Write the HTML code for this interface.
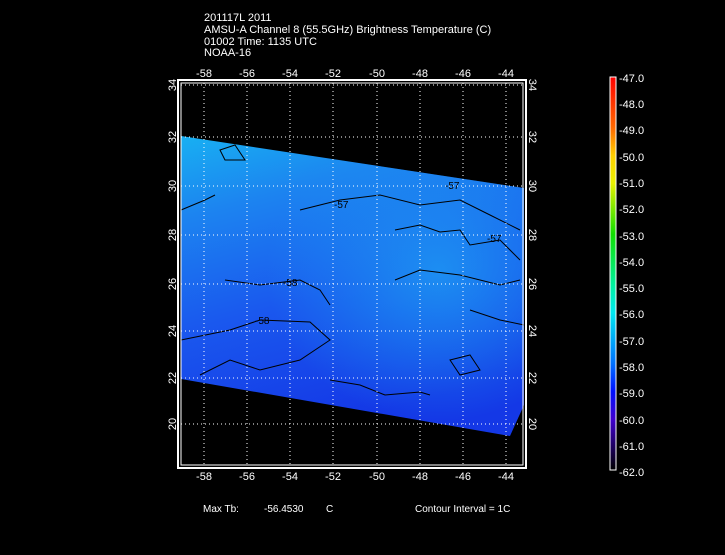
<!DOCTYPE html>
<html><head><style>
body{margin:0;background:#000;width:725px;height:550px;overflow:hidden;font-family:"Liberation Sans",sans-serif;}
svg text{font-family:"Liberation Sans",sans-serif;fill:#fff;}
</style></head><body>
<svg width="725" height="550" viewBox="0 0 725 550" xmlns="http://www.w3.org/2000/svg">
<defs>
<linearGradient id="sw" x1="0" y1="0" x2="0.3" y2="1">
<stop offset="0" stop-color="#18b0f2"/>
<stop offset="0.25" stop-color="#1c84f0"/>
<stop offset="0.6" stop-color="#1a58ee"/>
<stop offset="1" stop-color="#1438e6"/>
</linearGradient>
<radialGradient id="lt" cx="0.75" cy="0.45" r="0.5">
<stop offset="0" stop-color="#1c94f2" stop-opacity="0.9"/>
<stop offset="1" stop-color="#1c94f2" stop-opacity="0"/>
</radialGradient>
<linearGradient id="cb" x1="0" y1="0" x2="0" y2="1">
<stop offset="0" stop-color="#ff0000"/>
<stop offset="0.13" stop-color="#ff6a00"/>
<stop offset="0.2" stop-color="#ffd000"/>
<stop offset="0.27" stop-color="#e8f000"/>
<stop offset="0.4" stop-color="#10e000"/>
<stop offset="0.53" stop-color="#00f0a0"/>
<stop offset="0.6" stop-color="#00e8f0"/>
<stop offset="0.73" stop-color="#0070ff"/>
<stop offset="0.8" stop-color="#0010ff"/>
<stop offset="0.87" stop-color="#4000d0"/>
<stop offset="1" stop-color="#000000"/>
</linearGradient>
</defs>
<text x="204" y="21" font-size="11">201117L 2011</text>
<text x="204" y="33" font-size="11">AMSU-A Channel 8 (55.5GHz) Brightness Temperature (C)</text>
<text x="204" y="45" font-size="11">01002 Time: 1135 UTC</text>
<text x="204" y="56" font-size="11">NOAA-16</text>

<polygon points="181,136 524,188 524,405 510,436 181,379" fill="url(#sw)"/>
<polygon points="181,136 524,188 524,405 510,436 181,379" fill="url(#lt)"/>
<g fill="none" stroke="#000" stroke-width="1">
<path d="M181,210 L205,200 L215,195"/>
<path d="M300,210 L340,200 L380,195 L420,205 L460,200 L490,215 L520,230"/>
<path d="M395,230 L420,225 L440,232 L460,230 L470,245 L500,240 L520,260"/>
<path d="M395,280 L420,270 L460,275 L500,285 L520,280"/>
<path d="M181,340 L230,330 L260,320 L310,322 L330,340 L300,360 L260,370 L230,360 L200,375"/>
<path d="M225,280 L260,285 L300,280 L320,290 L330,305"/>
<path d="M220,150 L235,145 L245,160 L225,160 Z"/>
<path d="M450,360 L470,355 L480,370 L460,375 Z"/>
<path d="M330,380 L360,385 L385,395 L420,392 L430,395"/>
<path d="M470,310 L500,320 L524,325"/>
</g>
<text x="334" y="208" font-size="10" style="fill:#000">-57</text>
<text x="445" y="189" font-size="10" style="fill:#000">-57</text>
<text x="487" y="242" font-size="10" style="fill:#000">-57</text>
<text x="255" y="324" font-size="10" style="fill:#000">-58</text>
<text x="283" y="286" font-size="10" style="fill:#000">-58</text>

<g stroke="#fff" stroke-width="1" stroke-dasharray="1,3" fill="none">
<path d="M204,83V466M247,83V466M290,83V466M333,83V466M377,83V466M420,83V466M463,83V466M506,83V466"/>
<path d="M181,85H524M181,137H524M181,186H524M181,235H524M181,284H524M181,331H524M181,378H524M181,424H524"/>
</g>
<rect x="178" y="80" width="348" height="388" fill="none" stroke="#fff" stroke-width="2"/>
<rect x="181" y="83" width="342" height="382" fill="none" stroke="#fff" stroke-width="1"/>
<g font-size="11" text-anchor="middle">
<text x="204" y="77">-58</text><text x="247" y="77">-56</text><text x="290" y="77">-54</text><text x="333" y="77">-52</text><text x="377" y="77">-50</text><text x="420" y="77">-48</text><text x="463" y="77">-46</text><text x="506" y="77">-44</text>
<text x="204" y="480">-58</text><text x="247" y="480">-56</text><text x="290" y="480">-54</text><text x="333" y="480">-52</text><text x="377" y="480">-50</text><text x="420" y="480">-48</text><text x="463" y="480">-46</text><text x="506" y="480">-44</text>
</g>
<g font-size="11" text-anchor="middle">
<text transform="translate(176,85) rotate(-90)">34</text>
<text transform="translate(176,137) rotate(-90)">32</text>
<text transform="translate(176,186) rotate(-90)">30</text>
<text transform="translate(176,235) rotate(-90)">28</text>
<text transform="translate(176,284) rotate(-90)">26</text>
<text transform="translate(176,331) rotate(-90)">24</text>
<text transform="translate(176,378) rotate(-90)">22</text>
<text transform="translate(176,424) rotate(-90)">20</text>
<text transform="translate(529,85) rotate(90)">34</text>
<text transform="translate(529,137) rotate(90)">32</text>
<text transform="translate(529,186) rotate(90)">30</text>
<text transform="translate(529,235) rotate(90)">28</text>
<text transform="translate(529,284) rotate(90)">26</text>
<text transform="translate(529,331) rotate(90)">24</text>
<text transform="translate(529,378) rotate(90)">22</text>
<text transform="translate(529,424) rotate(90)">20</text>
</g>

<rect x="610" y="77" width="6" height="393" fill="url(#cb)" stroke="#fff" stroke-width="1"/>
<g font-size="11">
<text x="619" y="82">-47.0</text><text x="619" y="108">-48.0</text><text x="619" y="134">-49.0</text><text x="619" y="161">-50.0</text><text x="619" y="187">-51.0</text><text x="619" y="213">-52.0</text><text x="619" y="240">-53.0</text><text x="619" y="266">-54.0</text><text x="619" y="292">-55.0</text><text x="619" y="318">-56.0</text><text x="619" y="345">-57.0</text><text x="619" y="371">-58.0</text><text x="619" y="397">-59.0</text><text x="619" y="424">-60.0</text><text x="619" y="450">-61.0</text><text x="619" y="476">-62.0</text>
</g>
<text x="203" y="512" font-size="10">Max Tb:</text>
<text x="264" y="512" font-size="10">-56.4530</text>
<text x="326" y="512" font-size="10">C</text>
<text x="415" y="512" font-size="10">Contour Interval = 1C</text>
</svg>
</body></html>
